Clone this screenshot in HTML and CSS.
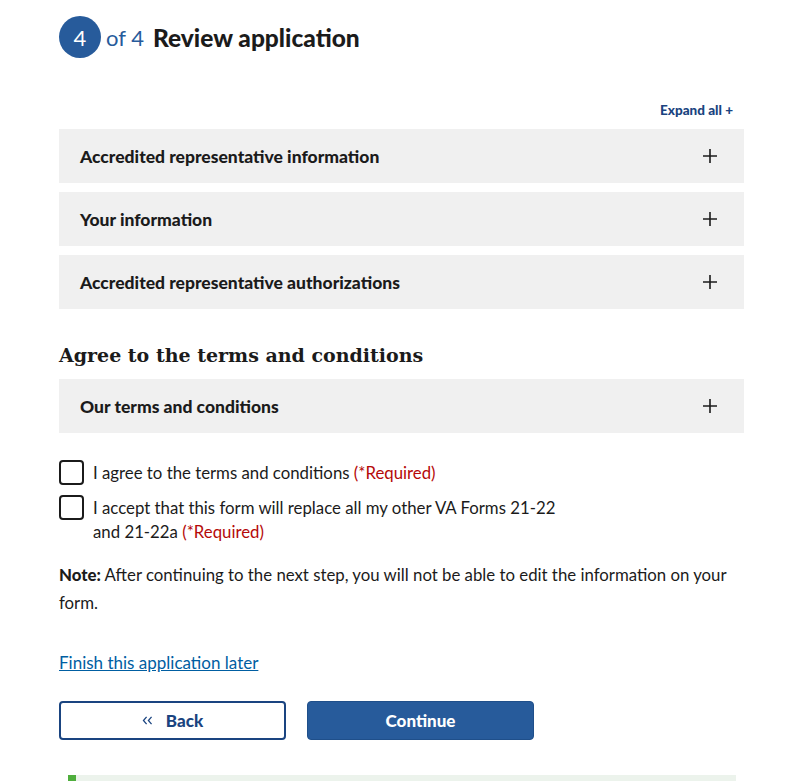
FILE: index.html
```html
<!DOCTYPE html>
<html lang="en">
<head>
<meta charset="utf-8">
<title>Review application</title>
<link rel="stylesheet" href="styles.css">
</head>
<body>
<main class="page">
  <header class="step">
    <span class="step-num">4</span>
    <span class="step-of">of 4</span>
    <h1 class="step-title">Review application</h1>
  </header>

  <div class="expand-row"><a class="expand-all" href="#">Expand all +</a></div>

  <div class="accordions">
    <div class="acc"><span>Accredited representative information</span><svg class="plus" viewBox="0 0 16 16"><path d="M8 1v14M1 8h14"/></svg></div>
    <div class="acc"><span>Your information</span><svg class="plus" viewBox="0 0 16 16"><path d="M8 1v14M1 8h14"/></svg></div>
    <div class="acc"><span>Accredited representative authorizations</span><svg class="plus" viewBox="0 0 16 16"><path d="M8 1v14M1 8h14"/></svg></div>
  </div>

  <h2 class="terms-heading">Agree to the terms and conditions</h2>
  <div class="acc"><span>Our terms and conditions</span><svg class="plus" viewBox="0 0 16 16"><path d="M8 1v14M1 8h14"/></svg></div>

  <div class="checks">
    <label class="check"><span class="box"></span><span class="check-text">I agree to the terms and conditions <span class="req">(*Required)</span></span></label>
    <label class="check"><span class="box"></span><span class="check-text">I accept that this form will replace all my other VA Forms 21-22<br>and 21-22a <span class="req">(*Required)</span></span></label>
  </div>

  <p class="note"><strong>Note:</strong> After continuing to the next step, you will not be able to edit the information on your form.</p>

  <a class="later" href="#">Finish this application later</a>

  <div class="buttons">
    <button class="btn btn-back"><svg class="chev" viewBox="0 0 12 10"><path d="M5 1L1.5 5 5 9M10.5 1L7 5l3.5 4"/></svg>Back</button>
    <button class="btn btn-continue">Continue</button>
  </div>

  <div class="progress"><div class="progress-fill" style="width:8px"></div></div>
</main>
</body>
</html>
```
FILE: styles.css
```css
* { box-sizing: border-box; }
html, body { margin: 0; padding: 0; background: #fff; }
body {
  font-family: Lato, "Noto Sans", sans-serif;
  color: #1b1b1b;
  font-size: 16.8px;
}
.page {
  width: 685px;
  margin-left: 59px;
  padding-top: 16px;
}
.step {
  display: flex;
  align-items: center;
  height: 42px;
}
.step-num {
  width: 42px;
  height: 42px;
  border-radius: 50%;
  background: #275b9b;
  color: #fff;
  font-size: 22px;
  display: flex;
  align-items: center;
  justify-content: center;
  margin-right: 5px;
}
.step-of {
  color: #275b9b;
  font-size: 22px;
  margin-right: 9px;
}
.step-title {
  margin: 0;
  font-size: 24.5px;
  font-weight: 900;
  color: #1b1b1b;
}
.expand-row {
  display: flex;
  justify-content: flex-end;
  padding-right: 11px;
  margin-top: 44px;
  height: 20px;
}
.expand-all {
  color: #1a4480;
  font-weight: 900;
  font-size: 13.5px;
  text-decoration: none;
}
.accordions {
  display: flex;
  flex-direction: column;
  gap: 9px;
  margin-top: 7px;
}
.acc {
  background: #f0f0f0;
  height: 54px;
  display: flex;
  align-items: center;
  justify-content: space-between;
  padding: 0 26px 0 21px;
  font-weight: 900;
  font-size: 17.5px;
}
.plus {
  width: 16px;
  height: 16px;
  stroke: #1b1b1b;
  stroke-width: 1.6;
  fill: none;
}
.terms-heading {
  font-family: "DejaVu Serif", serif;
  font-size: 19px;
  font-weight: 700;
  margin: 37px 0 14px;
  line-height: 1;
}
.checks {
  margin-top: 28px;
  display: flex;
  flex-direction: column;
  gap: 11px;
}
.check {
  display: flex;
  align-items: flex-start;
  line-height: 24px;
}
.box {
  flex: none;
  width: 25px;
  height: 25px;
  border: 2px solid #1b1b1b;
  border-radius: 4px;
  margin-right: 9px;
  margin-top: -1px;
}
.req { color: #b50909; }
.note {
  margin: 17px 0 0;
  line-height: 28px;
}
.note strong { font-weight: 900; }
.later {
  display: inline-block;
  margin-top: 34px;
  color: #005ea2;
  text-decoration: underline;
  line-height: 24px;
  font-size: 17px;
}
.buttons {
  display: flex;
  gap: 21px;
  margin-top: 26px;
}
.btn {
  width: 227px;
  height: 39px;
  border-radius: 4px;
  font-family: Lato, "Noto Sans", sans-serif;
  font-weight: 900;
  font-size: 17px;
  display: flex;
  align-items: center;
  justify-content: center;
  cursor: pointer;
}
.btn-back {
  background: #fff;
  color: #1a4480;
  border: 2px solid #1a4480;
}
.chev {
  width: 11px;
  height: 9px;
  fill: none;
  stroke: #1a4480;
  stroke-width: 1.4;
  margin-right: 13px;
}
.btn-continue {
  background: #275b9b;
  color: #fff;
  border: 1px solid #1f4f8a;
}
.progress {
  margin: 35px 8px 0 9px;
  height: 8px;
  background: #ecf3ec;
}
.progress-fill {
  height: 100%;
  background: #4fae3d;
}
```
